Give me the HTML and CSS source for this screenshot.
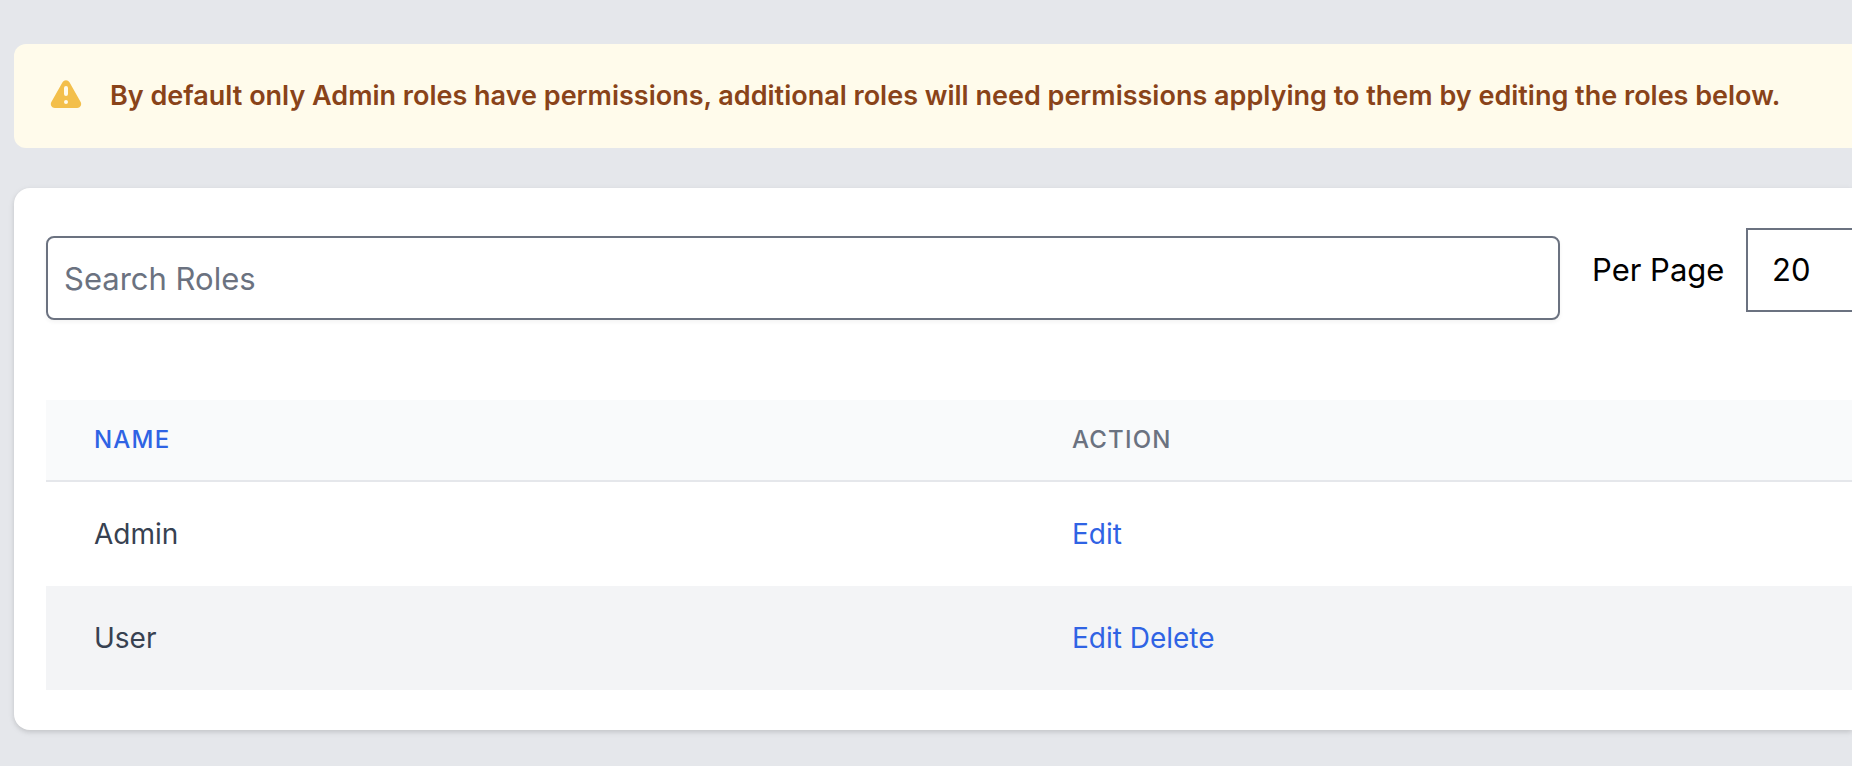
FILE: index.html
```html
<!DOCTYPE html>
<html lang="en">
<head>
<meta charset="utf-8">
<meta name="viewport" content="width=device-width, initial-scale=1">
<title>Roles</title>
<link rel="stylesheet" href="styles.css">
</head>
<body>
<main class="page">
  <div class="notice" role="alert">
    <svg class="notice-icon" viewBox="0 0 20 20" fill="currentColor" aria-hidden="true">
      <path fill-rule="evenodd" clip-rule="evenodd" d="M8.257 3.099c.765-1.36 2.722-1.36 3.486 0l5.58 9.92c.75 1.334-.213 2.98-1.742 2.98H4.42c-1.53 0-2.493-1.646-1.743-2.98l5.58-9.92zM11 13a1 1 0 11-2 0 1 1 0 012 0zm-1-8a1 1 0 00-1 1v3a1 1 0 002 0V6a1 1 0 00-1-1z"/>
    </svg>
    <p class="notice-text">By default only Admin roles have permissions, additional roles will need permissions applying to them by editing the roles below.</p>
  </div>
  <section class="card">
    <div class="toolbar">
      <input class="search" type="search" placeholder="Search Roles" aria-label="Search Roles">
      <div class="per-page">
        <label for="per-page">Per Page</label>
        <select class="per-page-select" id="per-page">
          <option>20</option>
          <option>50</option>
        </select>
      </div>
    </div>
    <table class="roles">
      <thead>
        <tr><th class="col-name" scope="col"><a class="link" href="#">NAME</a></th><th scope="col">ACTION</th></tr>
      </thead>
      <tbody>
        <tr><td>Admin</td><td><a class="link" href="#">Edit</a></td></tr>
        <tr><td>User</td><td><a class="link" href="#">Edit</a> <a class="link" href="#">Delete</a></td></tr>
      </tbody>
    </table>
  </section>
</main>
</body>
</html>
```
FILE: styles.css
```css
* { box-sizing: border-box; }

body {
  margin: 0;
  background: #e5e7eb;
  color: #000;
  font: 31px/48px Inter, "Liberation Sans", sans-serif;
}

.page {
  display: flex;
  flex-direction: column;
  gap: 40px;
  padding: 44px 0 36px 14px;
}

.notice {
  display: flex;
  gap: 24px;
  padding: 32px 0 32px 32px;
  border-radius: 12px 0 0 12px;
  background: #fffbeb;
}

.notice-icon {
  flex: none;
  width: 40px;
  height: 40px;
  color: #f3bf4b;
}

.notice-text {
  margin: 0;
  color: #894319;
  font-size: 27px;
  font-weight: 600;
  line-height: 40px;
}

.card {
  padding: 40px 0 40px 32px;
  border-radius: 16px 0 0 16px;
  background: #fff;
  box-shadow: 0 2px 6px rgba(0, 0, 0, 0.1), 0 2px 4px rgba(0, 0, 0, 0.06);
}

.toolbar {
  display: flex;
  align-items: flex-start;
  gap: 32px;
  margin-bottom: 80px;
}

.search {
  flex: 1;
  min-width: 0;
  height: 84px;
  margin: 8px 0 0;
  padding: 16px;
  border: 2px solid #6b7280;
  border-radius: 8px;
  background: #fff;
  box-shadow: 0 2px 4px rgba(0, 0, 0, 0.05);
  color: inherit;
  font: inherit;
  appearance: none;
}

.search::placeholder { color: #6b7280; opacity: 1; }

.per-page {
  display: flex;
  align-items: center;
  justify-content: space-between;
  min-width: 260px;
  white-space: nowrap;
}

.per-page-select {
  width: 106px;
  height: 84px;
  padding: 16px 0 16px 24px;
  border: 2px solid #6b7280;
  border-right: 0;
  border-radius: 0;
  background: #fff;
  color: inherit;
  font: inherit;
  appearance: none;
}

.roles {
  width: 100%;
  border-collapse: separate;
  border-spacing: 0;
  table-layout: fixed;
  text-align: left;
}

.roles th {
  padding: 24px 48px;
  border-bottom: 2px solid #e5e7eb;
  background: #f9fafb;
  color: #6b7280;
  font-size: 24px;
  font-weight: 500;
  line-height: 32px;
  letter-spacing: 0.05em;
}

.roles .col-name { width: 54.15%; }

.roles td {
  padding: 32px 48px;
  color: #374151;
  font-size: 28px;
  line-height: 40px;
}

.roles tbody tr:nth-child(even) { background: #f3f4f6; }

.link { color: #2f63e4; text-decoration: none; }
```
